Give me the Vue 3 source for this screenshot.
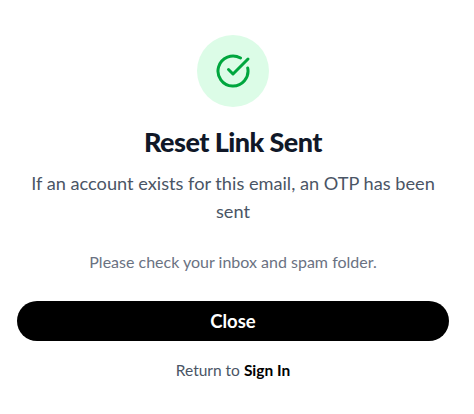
<script setup>
const title = 'Reset Link Sent'
</script>

<template>
  <main class="card">
    <div class="badge">
      <svg class="icon" viewBox="0 0 24 24" width="36" height="36" fill="none" stroke="currentColor" stroke-width="2" stroke-linecap="round" stroke-linejoin="round">
        <path d="M21.801 10A10 10 0 1 1 17 3.335" />
        <path d="m9 11 3 3L22 4" />
      </svg>
    </div>
    <h1 class="title">{{ title }}</h1>
    <p class="sub">If an account exists for this email, an OTP has been sent</p>
    <p class="hint">Please check your inbox and spam folder.</p>
    <button class="close" type="button">Close</button>
    <p class="back">Return to <a class="link">Sign In</a></p>
  </main>
</template>

<style>
html, body { margin: 0; background: #fff; }
</style>

<style scoped>
.card {
  box-sizing: border-box;
  width: 466px;
  height: 414px;
  padding: 35px 17px 0;
  display: flex;
  flex-direction: column;
  align-items: center;
  font-family: Lato, "Noto Sans", sans-serif;
  text-align: center;
}
.badge {
  width: 72px;
  height: 72px;
  border-radius: 50%;
  background: #dcfce7;
  color: #00a63e;
  display: flex;
  align-items: center;
  justify-content: center;
}
.icon { display: block; }
.title {
  margin: 19px 0 0;
  font-size: 27px;
  line-height: 32px;
  font-weight: 900;
  letter-spacing: -0.55px;
  color: #101828;
}
.sub {
  margin: 11px 0 0;
  font-size: 18.2px;
  line-height: 28px;
  color: #4a5565;
  width: 100%;
}
.hint {
  margin: 27px 0 0;
  font-size: 16px;
  line-height: 20px;
  color: #6a7282;
}
.close {
  margin-top: 29px;
  width: 100%;
  height: 40px;
  border: 0;
  border-radius: 20px;
  background: #000;
  color: #fff;
  font: 700 18.5px/24px Lato, "Noto Sans", sans-serif;
}
.back {
  margin: 19px 0 0;
  font-size: 15.5px;
  line-height: 20px;
  color: #4a5565;
}
.link {
  font-weight: 700;
  color: #000;
}
</style>
